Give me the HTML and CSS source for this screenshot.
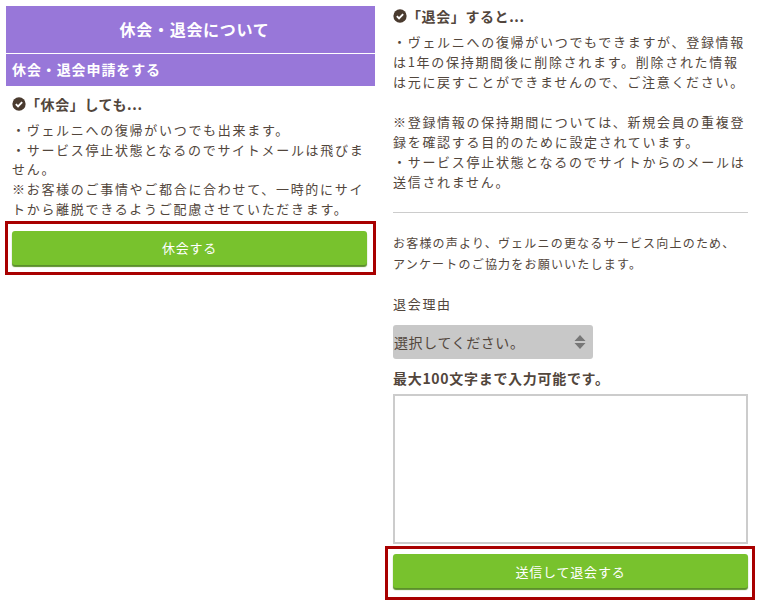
FILE: index.html
```html
<!DOCTYPE html>
<html lang="ja">
    <head>
        <meta charset="utf-8">
        <title>休会・退会について</title>
        <link rel="stylesheet" href="styles.css">
    </head>
    <body>
        <div class="page">
            <div class="left">
                <h1 class="title">休会・退会について</h1>
                <h2 class="subtitle">休会・退会申請をする</h2>
                <div class="left-body">
                    <h3 class="check">
                        <svg class="check-icon" viewBox="0 0 16 16"><circle cx="8" cy="8" r="7.6" fill="#4a3b2f"/><path d="M4.4 8.2l2.5 2.5 4.7-4.8" fill="none" stroke="#fff" stroke-width="2.2"/></svg>
                        <span>「休会」しても...</span>
                    </h3>
                    <p class="note">・ヴェルニへの復帰がいつでも出来ます。<br>・サービス停止状態となるのでサイトメールは飛びません。<br>※お客様のご事情やご都合に合わせて、一時的にサイトから離脱できるようご配慮させていただきます。</p>
                </div>
                <div class="frame frame-left">
                    <button class="btn">休会する</button>
                </div>
            </div>
            <div class="right">
                <h3 class="check">
                    <svg class="check-icon" viewBox="0 0 16 16"><circle cx="8" cy="8" r="7.6" fill="#4a3b2f"/><path d="M4.4 8.2l2.5 2.5 4.7-4.8" fill="none" stroke="#fff" stroke-width="2.2"/></svg>
                    <span>「退会」すると...</span>
                </h3>
                <p class="note note-wide">・ヴェルニへの復帰がいつでもできますが、登録情報は1年の保持期間後に削除されます。削除された情報は元に戻すことができませんので、ご注意ください。<br><br>※登録情報の保持期間については、新規会員の重複登録を確認する目的のために設定されています。<br>・サービス停止状態となるのでサイトからのメールは送信されません。</p>
                <hr class="rule">
                <p class="survey">お客様の声より、ヴェルニの更なるサービス向上のため、アンケートのご協力をお願いいたします。</p>
                <label class="reason-label" for="reason">退会理由</label>
                <div class="select-wrap">
                    <select id="reason" class="reason">
                        <option>選択してください。</option>
                    </select>
                    <svg class="select-arrows" viewBox="0 0 12 14"><path d="M6 0l5.5 6H.5zM6 14L.5 8h11z" fill="#777"/></svg>
                </div>
                <label class="limit-label" for="comment">最大100文字まで入力可能です。</label>
                <textarea id="comment" class="comment"></textarea>
                <div class="frame frame-right">
                    <button class="btn">送信して退会する</button>
                </div>
            </div>
        </div>
    </body>
</html>
```

FILE: styles.css
```css
* {
    box-sizing: border-box;
}
body {
    margin: 0;
    background-color: #fff;
    color: #52463c;
    font-family: "Noto Sans CJK JP", "Noto Sans", sans-serif;
    font-size: 13px;
}
h1, h2, h3, p {
    margin: 0;
}
.page {
    display: grid;
    grid-template-columns: 369px 355px;
    column-gap: 18px;
    padding: 6px 0 0 6px;
}
.title {
    height: 48px;
    padding-left: 8px;
    border-bottom: 1px solid #fff;
    background-color: #9877d9;
    color: #fff;
    font-size: 16px;
    line-height: 46px;
    letter-spacing: 0.7px;
    text-align: center;
}
.subtitle {
    height: 32px;
    padding-left: 6px;
    background-color: #9877d9;
    color: #fff;
    font-size: 14px;
    line-height: 31px;
    letter-spacing: 0.9px;
}
.left-body {
    padding: 7px 6px 0;
}
.check {
    display: flex;
    align-items: center;
    height: 22px;
    font-size: 14px;
    font-weight: 700;
    letter-spacing: 0.6px;
}
.check-icon {
    width: 14px;
    height: 14px;
    flex: none;
}
.note {
    margin-top: 5px;
    font-size: 13px;
    line-height: 19.7px;
    letter-spacing: 1.7px;
}
.frame {
    border: 3px solid #a80000;
}
.frame-left {
    height: 54px;
    margin: 2px -1px 0;
    padding: 7px 6px 0 4px;
}
.frame-right {
    height: 54px;
    margin: 2px -7px 0 -8px;
    padding: 5px 4px 0 5px;
}
.btn {
    display: block;
    width: 100%;
    height: 34px;
    border: 0;
    border-radius: 3px;
    background-color: #78c22d;
    box-shadow: 0 2px 1px #5b8f2a;
    color: #fff;
    font-family: inherit;
    font-size: 13px;
    letter-spacing: 0.8px;
}
.right {
    margin-top: -1px;
}
.note-wide {
    margin-top: 5px;
    line-height: 20px;
}
.rule {
    height: 1px;
    margin: 20px 0 0;
    border: 0;
    background-color: #ccc;
}
.survey {
    margin-top: 19px;
    font-size: 12px;
    line-height: 21px;
    letter-spacing: 1.2px;
}
.reason-label {
    display: block;
    margin-top: 20px;
    line-height: 20px;
    letter-spacing: 1.7px;
}
.select-wrap {
    position: relative;
    width: 200px;
    height: 34px;
    margin-top: 11px;
}
.reason {
    width: 100%;
    height: 100%;
    padding: 0 1px;
    border: 0;
    border-radius: 3px;
    background-color: #c8c8c8;
    color: #52463c;
    font-family: inherit;
    font-size: 14px;
    letter-spacing: 0.6px;
    appearance: none;
}
.select-arrows {
    position: absolute;
    top: 10px;
    right: 7px;
    width: 12px;
    height: 14px;
}
.limit-label {
    display: block;
    margin-top: 9px;
    font-size: 14px;
    font-weight: 700;
    line-height: 20px;
    letter-spacing: 0.7px;
}
.comment {
    display: block;
    width: 100%;
    height: 150px;
    margin-top: 6px;
    border: 2px solid #ccc;
    resize: none;
}
```
